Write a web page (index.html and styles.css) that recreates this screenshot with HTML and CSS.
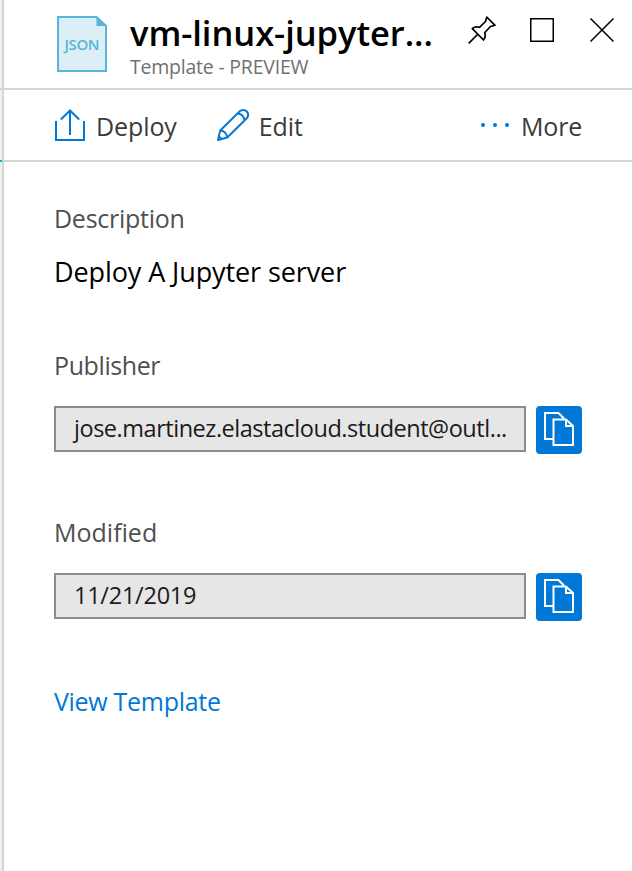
FILE: index.html
```html
<!DOCTYPE html>
<html lang="en">
<head>
<meta charset="utf-8">
<title>vm-linux-jupyter</title>
<link rel="stylesheet" href="styles.css">
</head>
<body>
<div class="gutter"><span class="gutter-top"></span><span class="gutter-mid"></span><span class="gutter-rest"></span></div>
<main class="blade">
  <header class="header">
    <svg class="file-icon" width="50" height="56" viewBox="0 0 50 56">
      <path d="M1 1H39.500L49 10V55H1Z" fill="#dceff7" stroke="#59b4d9" stroke-width="2"/>
      <path d="M39.500 0V10H50Z" fill="#59b4d9"/>
      <text class="file-text" x="25" y="33.500" text-anchor="middle" textLength="35">JSON</text>
    </svg>
    <div class="titles">
      <h1 class="title">vm-linux-jupyter...</h1>
      <p class="subtitle">Template - PREVIEW</p>
    </div>
    <div class="controls">
      <svg width="28" height="28" viewBox="0 0 28 28" fill="none" stroke="#000" stroke-width="1.700" stroke-linejoin="round">
        <path d="M0.700 27.300L10 18M18.800 1L27 9.300L22.500 10.500L16.800 16.500C17.600 19.500 17.300 22 15.500 24L4.300 12.600C6.300 10.800 8.800 10.600 11.500 11.300L17.500 5.500Z"/>
      </svg>
      <svg width="24" height="24" viewBox="0 0 24 24" fill="none" stroke="#000" stroke-width="1.500"><rect x=".75" y=".75" width="22.500" height="22.500"/></svg>
      <svg width="24" height="24" viewBox="0 0 24 24" fill="none" stroke="#000" stroke-width="1.500"><path d="M.5.500L23.500 23.500M23.500.500L.5 23.500"/></svg>
    </div>
  </header>
  <nav class="toolbar">
    <a class="command">
      <svg width="30" height="32" viewBox="0 0 30 32" fill="none" stroke="#0078d7" stroke-width="2"><path d="M1 12V31H29V12M15 26V1.500M5.800 10.500L15 1.500L24.200 10.500"/></svg>
      <span>Deploy</span>
    </a>
    <a class="command edit">
      <svg width="32" height="32" viewBox="0 0 32 32" fill="none" stroke="#0078d7" stroke-width="1.900" stroke-linejoin="round"><path d="M1 31L3.200 21.500L22.500 2.500C24.700.300 28 .600 29.800 2.500C31.600 4.500 31.500 7.300 29.500 9.500L10.300 28.500ZM3.200 21.500C6.800 21.500 9.900 24.500 10.300 28.500M20.500 4.500C24.200 4.800 27 7.500 27.500 11.500M2 27.500L4.500 30"/></svg>
      <span>Edit</span>
    </a>
    <a class="command more">
      <svg width="30" height="4" viewBox="0 0 30 4" fill="#0078d7"><circle cx="3" cy="2" r="2"/><circle cx="15" cy="2" r="2"/><circle cx="27" cy="2" r="2"/></svg>
      <span>More</span>
    </a>
  </nav>
  <section class="content">
    <h2 class="label">Description</h2>
    <p class="description">Deploy A Jupyter server</p>
    <h2 class="label publisher">Publisher</h2>
    <div class="field">
      <div class="input mail">jose.martinez.elastacloud.student@outl...</div>
      <button class="copy"><svg width="30" height="34" viewBox="0 0 30 34" fill="none" stroke="#fff" stroke-width="2"><path d="M9 27H1V1H14.500L20 6.500M9.500 7.500H22L29 14V33H9.500ZM22 7.500V14H29"/></svg></button>
    </div>
    <h2 class="label modified">Modified</h2>
    <div class="field">
      <div class="input date">11/21/2019</div>
      <button class="copy"><svg width="30" height="34" viewBox="0 0 30 34" fill="none" stroke="#fff" stroke-width="2"><path d="M9 27H1V1H14.500L20 6.500M9.500 7.500H22L29 14V33H9.500ZM22 7.500V14H29"/></svg></button>
    </div>
    <a class="link">View Template</a>
  </section>
</main>
</body>
</html>
```
FILE: styles.css
```css
* { box-sizing: border-box; }
body {
  margin: 0;
  height: 871px;
  display: flex;
  overflow: hidden;
  background: #fff;
  font-family: "Open Sans", "Noto Sans", sans-serif;
}
h1, h2, p { margin: 0; font-weight: 400; white-space: nowrap; }
.gutter { width: 2px; display: flex; flex-direction: column; background: #efefef; }
.gutter-top { height: 90px; border-bottom: 2px solid #d4d4d4; }
.gutter-mid { height: 72px; border-bottom: 2px solid #00b4d8; }
.gutter-rest { flex: 1; }
.blade {
  width: 631px;
  border-left: 2px solid #d4d4d4;
  border-right: 1px solid #d4d4d4;
}
.header {
  height: 90px;
  border-bottom: 2px solid #d4d4d4;
  display: flex;
  align-items: flex-start;
  padding-left: 53px;
}
.file-icon { margin-top: 16px; }
.file-text { font-size: 15px; font-weight: 600; fill: #59b4d9; }
.titles { width: 361px; padding: 12px 0 0 23px; }
.title { font-size: 34.5px; font-weight: 600; line-height: 42px; letter-spacing: -0.05px; color: #000; }
.subtitle { font-size: 19.5px; line-height: 26px; color: #707070; letter-spacing: -0.22px; }
.controls { display: flex; gap: 34px; padding-top: 18px; }
.controls svg:first-child { margin-top: -2px; }
.controls svg:nth-child(3) { margin-left: 2px; }
.toolbar {
  height: 72px;
  border-bottom: 2px solid #d4d4d4;
  display: flex;
  align-items: center;
  padding: 0 50px 0 51px;
}
.command { display: flex; align-items: center; gap: 11px; font-size: 25px; line-height: 34px; letter-spacing: -0.1px; color: #3a3a3a; }
.command span { padding-top: 1px; }
.edit { margin-left: 40px; gap: 10px; }
.more { margin-left: auto; letter-spacing: -0.2px; }
.content { padding: 38px 50px 0 50px; }
.label { font-size: 25px; line-height: 36px; letter-spacing: -0.27px; color: #505050; }
.publisher { letter-spacing: -0.4px; }
.modified { letter-spacing: 0; }
.description { font-size: 27px; line-height: 40px; margin: 16px 0 55px; letter-spacing: -0.1px; color: #000; }
.field { display: flex; gap: 10px; height: 48px; margin: 23px 0 60px; }
.input {
  width: 472px;
  height: 46px;
  border: 2px solid #8c8c8c;
  background: #e6e6e6;
  font-size: 23.5px;
  line-height: 41px;
  padding-left: 18px;
  white-space: nowrap;
  overflow: hidden;
  color: #1a1a1a;
}
.mail { letter-spacing: -0.47px; }
.date { letter-spacing: -0.25px; }
.copy {
  width: 46px;
  height: 48px;
  border: 0;
  border-radius: 4px;
  background: #0078d7;
  padding: 0 0 2px;
  display: flex;
  align-items: center;
  justify-content: center;
}
.link { display: block; margin-top: 62px; font-size: 25px; line-height: 36px; letter-spacing: -0.3px; color: #0078d7; }
```
